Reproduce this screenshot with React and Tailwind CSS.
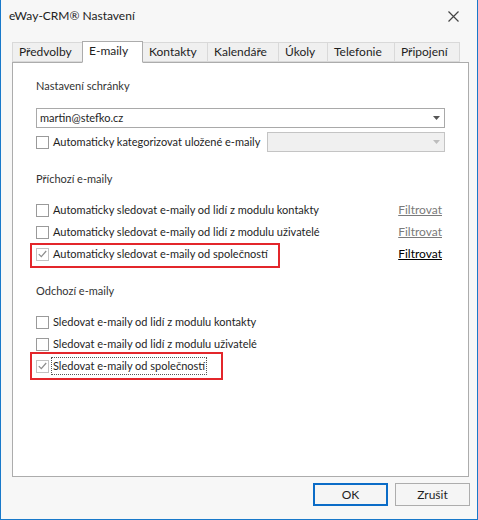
import { useState } from 'react'

const font = { fontFamily: 'Lato, "Liberation Sans", sans-serif' }

const tabs = [
  { label: 'Předvolby', w: 'w-[71px]' },
  { label: 'E-maily', w: 'w-[61px]' },
  { label: 'Kontakty', w: 'w-[66px]' },
  { label: 'Kalendáře', w: 'w-[72px]' },
  { label: 'Úkoly', w: 'w-[50px]' },
  { label: 'Telefonie', w: 'w-[68px]' },
  { label: 'Připojení', w: 'w-[66px]' },
]

function CloseIcon() {
  return (
    <svg width="11" height="11" viewBox="0 0 11 11" fill="none" stroke="#444" strokeWidth="1.2">
      <path d="M0.5 0.5l10 10M10.5 0.5l-10 10" />
    </svg>
  )
}

function Arrow({ color = '#555' }) {
  return (
    <svg width="7" height="4" viewBox="0 0 7 4">
      <path d="M0 0h7L3.5 4z" fill={color} />
    </svg>
  )
}

function Checkbox({ checked, onChange }) {
  return (
    <button
      onClick={onChange}
      className={`w-[13px] h-[13px] shrink-0 flex items-center justify-center border bg-white ${checked ? 'border-[#c2c2c2]' : 'border-[#9a9a9a]'}`}
    >
      {checked && (
        <svg width="9" height="8" viewBox="0 0 9 8" fill="none" stroke="#8c8c8c" strokeWidth="1.2">
          <path d="M0.8 4.2l2.5 2.5L8.2 1" />
        </svg>
      )}
    </button>
  )
}

function CheckRow({ label, checked, filter, filterActive, focused }) {
  const [on, setOn] = useState(checked)
  return (
    <div className="h-[22px] flex items-center pr-[3px] whitespace-nowrap">
      <Checkbox checked={on} onChange={() => setOn(!on)} />
      <span className={`ml-[3px] px-[1px] leading-[16px] ${focused ? 'outline outline-1 outline-dotted outline-[#555]' : ''}`}>{label}</span>
      {filter && (
        <span className={`ml-auto text-[12px] underline ${filterActive ? 'text-black' : 'text-[#7a7a7a]'}`}>Filtrovat</span>
      )}
    </div>
  )
}

export default function App() {
  const [tab, setTab] = useState('E-maily')
  const [categorize, setCategorize] = useState(false)

  return (
    <div style={font} className="w-[478px] h-[520px] bg-[#f7f7f7] border-x border-b border-[#1979ca] flex flex-col text-[11px] text-[#1e1e1e] whitespace-nowrap">
      {/* Title bar */}
      <div className="h-[32px] flex items-center justify-between pl-[8px] pr-[18px]">
        <span className="text-[12px] text-[#222]">eWay-CRM® Nastavení</span>
        <CloseIcon />
      </div>

      {/* Tabs */}
      <div className="ml-[11px] mt-[9px] flex items-end h-[21px] relative z-10 text-[12px]">
        {tabs.map(t => {
          const active = t.label === tab
          return (
            <div
              key={t.label}
              onClick={() => setTab(t.label)}
              className={`${t.w} pl-[6px] flex items-center border -ml-px first:ml-0 cursor-default ${active ? 'h-[22px] bg-white border-[#acacac] border-b-white relative z-10 -mb-px pb-[2px]' : 'h-[20px] bg-[#f0f0f0] border-[#d9d9d9]'}`}
            >
              {t.label}
            </div>
          )
        })}
      </div>

      {/* Panel */}
      <div className="ml-[11px] w-[457px] h-[415px] border border-[#acacac] bg-white relative pl-[23px] pr-[23px]">
        <div className="mt-[15px] h-[16px] leading-[16px] text-[#333]">Nastavení schránky</div>
        <div className="mt-[14px] h-[20px] border border-[#a9a9a9] flex items-center pl-[3px] pr-[4px]">
          <span>martin@stefko.cz</span>
          <span className="ml-auto"><Arrow /></span>
        </div>
        <div className="mt-[4px] h-[20px] flex items-center">
          <Checkbox checked={categorize} onChange={() => setCategorize(!categorize)} />
          <span className="ml-[4px]">Automaticky kategorizovat uložené e-maily</span>
          <div className="ml-auto w-[178px] h-[20px] border border-[#c4c4c4] bg-[#f0f0f0] flex items-center justify-end pr-[4px]">
            <Arrow color="#bdbdbd" />
          </div>
        </div>

        <div className="mt-[19px] h-[16px] leading-[16px] text-[#333]">Příchozí e-maily</div>
        <div className="mt-[12px]">
          <CheckRow label="Automaticky sledovat e-maily od lidí z modulu kontakty" filter />
          <CheckRow label="Automaticky sledovat e-maily od lidí z modulu uživatelé" filter />
          <CheckRow label="Automaticky sledovat e-maily od společností" checked filter filterActive />
        </div>

        <div className="mt-[18px] h-[16px] leading-[16px] text-[#333]">Odchozí e-maily</div>
        <div className="mt-[12px]">
          <CheckRow label="Sledovat e-maily od lidí z modulu kontakty" />
          <CheckRow label="Sledovat e-maily od lidí z modulu uživatelé" />
          <CheckRow label="Sledovat e-maily od společností" checked focused />
        </div>

        {/* annotation highlights */}
        <div className="absolute left-[17px] top-[180px] w-[250px] h-[25px] border-2 border-[#e3262b] pointer-events-none" />
        <div className="absolute left-[17px] top-[289px] w-[193px] h-[28px] border-2 border-[#e3262b] pointer-events-none" />
      </div>

      {/* Buttons */}
      <div className="mt-[6px] flex justify-end gap-[7px] pr-[7px] text-[12px]">
        <button className="w-[75px] h-[23px] border-2 border-[#0b6cc7] bg-[#f5f5f5]">OK</button>
        <button className="w-[75px] h-[23px] border border-[#adadad] bg-[#f5f5f5]">Zrušit</button>
      </div>
    </div>
  )
}
